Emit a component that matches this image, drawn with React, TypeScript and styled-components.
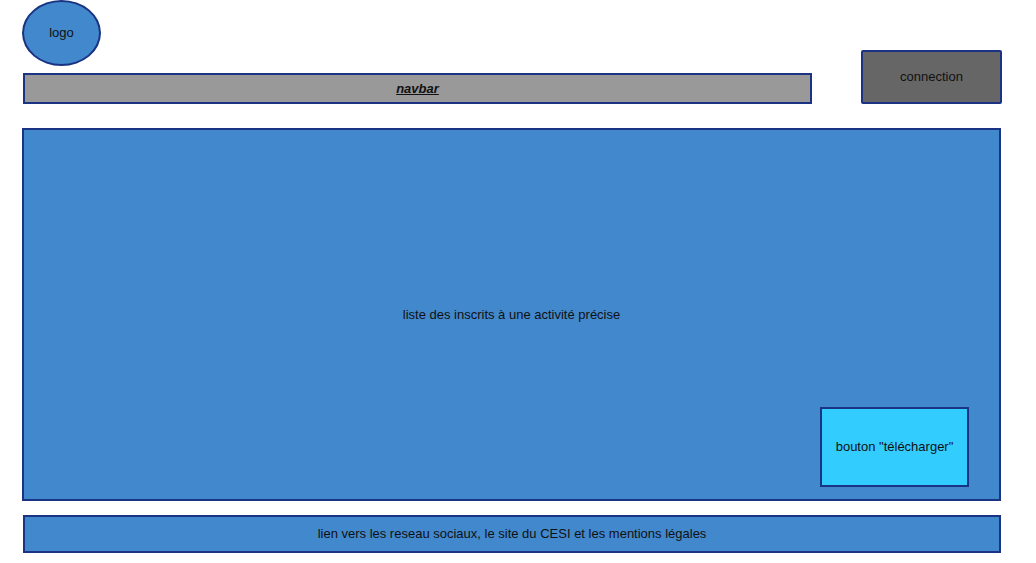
import React from "react";
import styled, { createGlobalStyle } from "styled-components";

const colors = {
  outline: "#1a3382",
  blue: "#4288cd",
  cyan: "#33ccff",
  silver: "#999999",
  slate: "#666666",
  text: "#111111",
};

const GlobalStyle = createGlobalStyle`
  *, *::before, *::after {
    box-sizing: border-box;
  }

  body {
    margin: 0;
    background: #ffffff;
    color: ${colors.text};
    font: 13px/16px "Liberation Sans", Arial, sans-serif;
  }
`;

const Page = styled.div`
  display: flex;
  flex-direction: column;
  min-height: 100vh;
  padding: 0 34px 10px 22px;
`;

const Header = styled.header`
  display: flex;
  align-items: flex-end;
  gap: 49px;
  margin-bottom: 24px;
`;

const Brand = styled.div`
  flex: 1;
  display: flex;
  flex-direction: column;
  gap: 7px;
`;

const Logo = styled.div`
  display: grid;
  place-items: center;
  width: 79px;
  height: 66px;
  border: 2px solid ${colors.outline};
  border-radius: 50%;
  background: ${colors.blue};
`;

const Navbar = styled.nav`
  display: flex;
  justify-content: center;
  align-items: center;
  height: 31px;
  margin-left: 1px;
  border: 2px solid ${colors.outline};
  background: ${colors.silver};
`;

const NavLink = styled.a`
  color: inherit;
  font-weight: bold;
  font-style: italic;
  text-decoration: underline;
`;

const ActionButton = styled.button<{ $fill: string; $radius?: number }>`
  padding: 0 12px;
  border: 2px solid ${colors.outline};
  border-radius: ${({ $radius = 0 }) => $radius}px;
  background: ${({ $fill }) => $fill};
  color: inherit;
  font: inherit;
  white-space: nowrap;
  cursor: pointer;
`;

const ConnectionButton = styled(ActionButton)`
  width: 141px;
  height: 54px;
`;

const Content = styled.main`
  flex: 1;
  display: grid;
  grid-template-areas: "stack";
  min-height: 240px;
  margin: 0 1px 14px 0;
  border: 2px solid ${colors.outline};
  background: ${colors.blue};
`;

const ContentTitle = styled.p`
  grid-area: stack;
  place-self: center;
  margin: 0;
`;

const DownloadButton = styled(ActionButton)`
  grid-area: stack;
  place-self: end;
  width: 149px;
  height: 80px;
  margin: 0 30px 12px 0;
`;

const Footer = styled.footer`
  display: flex;
  justify-content: center;
  align-items: center;
  min-height: 38px;
  margin: 0 1px;
  border: 2px solid ${colors.outline};
  background: ${colors.blue};
`;

const FooterLink = styled.a`
  color: inherit;
  text-decoration: none;
`;

export default function App() {
  return (
    <>
      <GlobalStyle />
      <Page>
        <Header>
          <Brand>
            <Logo>logo</Logo>
            <Navbar>
              <NavLink href="#">navbar</NavLink>
            </Navbar>
          </Brand>
          <ConnectionButton type="button" $fill={colors.slate} $radius={2}>
            connection
          </ConnectionButton>
        </Header>
        <Content>
          <ContentTitle>liste des inscrits à une activité précise</ContentTitle>
          <DownloadButton type="button" $fill={colors.cyan}>
            bouton "télécharger"
          </DownloadButton>
        </Content>
        <Footer>
          <FooterLink href="#">
            lien vers les reseau sociaux, le site du CESI et les mentions légales
          </FooterLink>
        </Footer>
      </Page>
    </>
  );
}
